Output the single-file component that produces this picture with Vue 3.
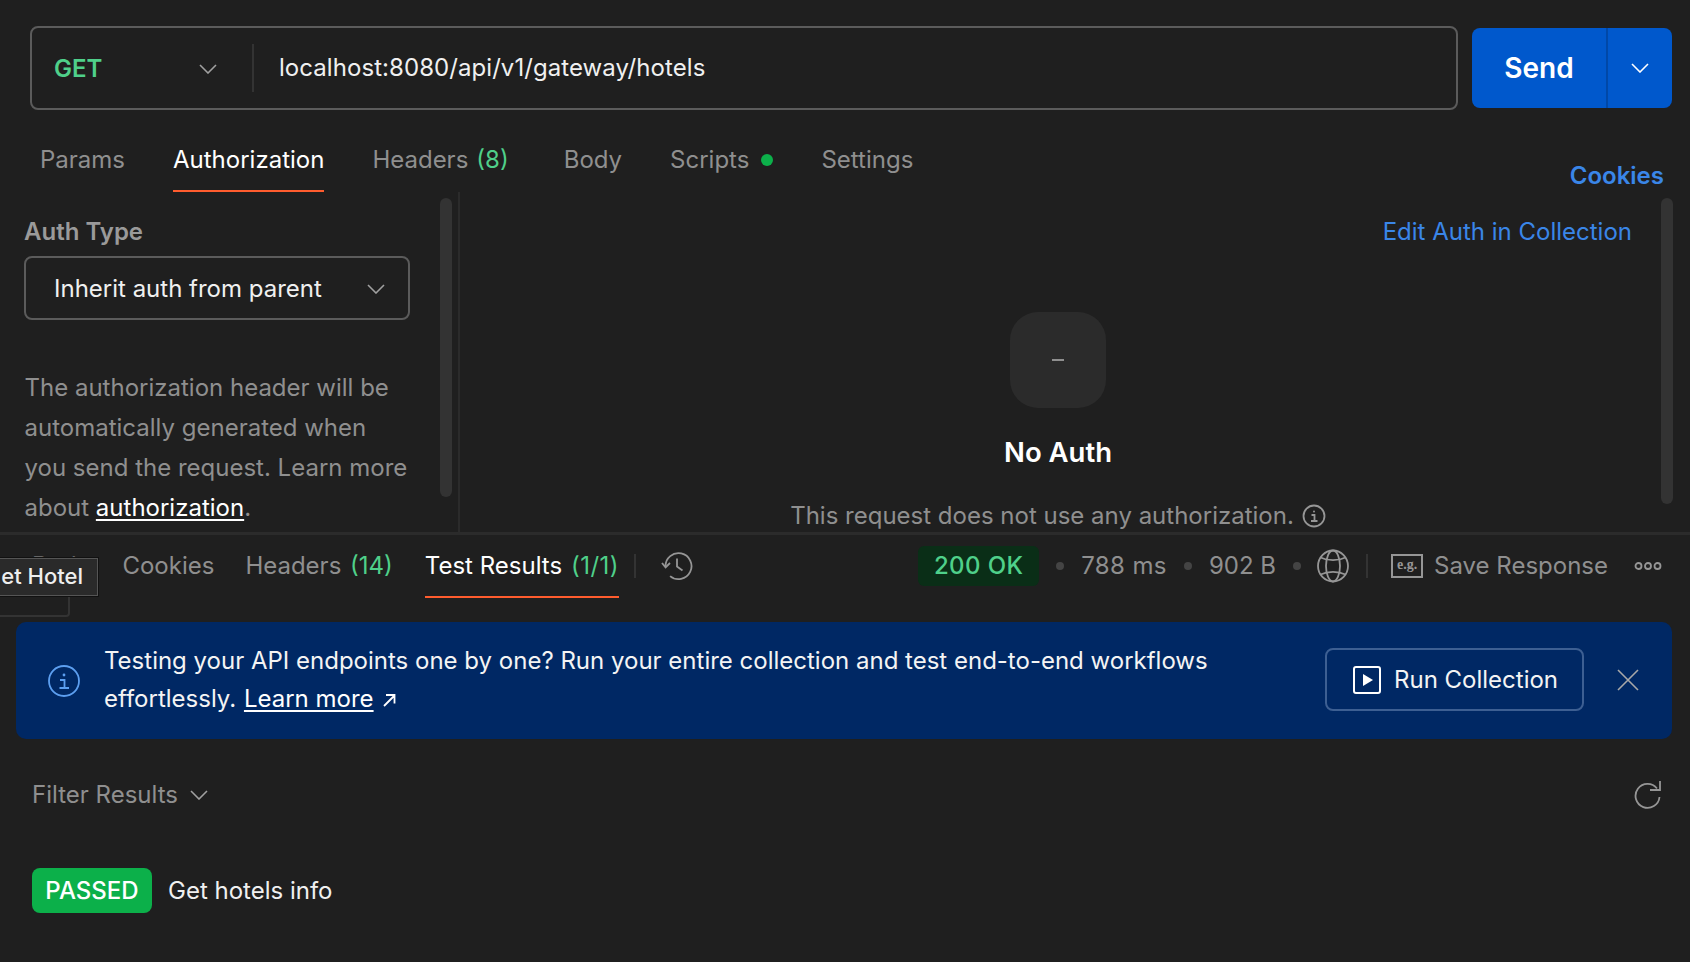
<script setup>
const reqTabs = [
  { label: 'Params' },
  { label: 'Authorization', active: true },
  { label: 'Headers', count: '(8)', wide: true },
  { label: 'Body' },
  { label: 'Scripts', dot: true },
  { label: 'Settings' }
]
</script>

<template>
  <div class="page">
    <div class="request-row">
      <div class="url-bar">
        <div class="method">
          <span class="method-name">GET</span>
          <svg class="chev" width="18" height="10" viewBox="0 0 18 10"><path d="M1 1l8 8 8-8" /></svg>
        </div>
        <div class="url">localhost:8080/api/v1/gateway/hotels</div>
      </div>
      <div class="send">
        <span class="send-label">Send</span>
        <span class="send-more">
          <svg class="chev white" width="18" height="10" viewBox="0 0 18 10"><path d="M1 1l8 8 8-8" /></svg>
        </span>
      </div>
    </div>

    <div class="req-tabs">
      <div
        v-for="t in reqTabs"
        :key="t.label"
        class="tab"
        :class="{ active: t.active, wide: t.wide }"
      >
        {{ t.label }}<span v-if="t.count" class="count">{{ t.count }}</span><span v-if="t.dot" class="dot"></span>
      </div>
      <div class="cookies-link">Cookies</div>
    </div>

    <div class="panes">
      <div class="left-pane">
        <div class="auth-label">Auth Type</div>
        <div class="auth-select">
          <span>Inherit auth from parent</span>
          <svg class="chev" width="18" height="10" viewBox="0 0 18 10"><path d="M1 1l8 8 8-8" /></svg>
        </div>
        <p class="auth-help">
          The authorization header will be automatically generated when you send the request. Learn more about <a class="link">authorization</a>.
        </p>
        <div class="scrollbar left-scroll"></div>
      </div>
      <div class="right-pane">
        <div class="edit-link">Edit Auth in Collection</div>
        <div class="no-auth-icon"><span class="dash"></span></div>
        <div class="no-auth-title">No Auth</div>
        <div class="no-auth-text">
          This request does not use any authorization.
          <svg width="24" height="24" viewBox="0 0 24 24" class="ic-gray">
            <circle cx="12" cy="12" r="10.5" />
            <circle cx="12" cy="7.5" r="1" class="fill" />
            <path d="M9.5 11h3v6M9 17h6.5" />
          </svg>
        </div>
        <div class="scrollbar right-scroll"></div>
      </div>
    </div>

    <div class="res-bar">
      <div class="res-tabs">
        <div class="tab res-body">Body</div>
        <div class="tab">Cookies</div>
        <div class="tab">Headers <span class="count-tight">(14)</span></div>
        <div class="tab active">Test Results <span class="count-tight spaced">(1/1)</span></div>
      </div>
      <span class="vsep first-sep"></span>
      <svg class="ic-gray history" width="32" height="32" viewBox="0 0 32 32">
        <path d="M4.5 16.5a13 13 0 1 1 4.6 9.6" />
        <path d="M1 13l3.6 4.4L9 13" />
        <path d="M16 8.5v8l5.5 4" />
      </svg>
      <div class="res-meta">
        <span class="status">200 OK</span>
        <span class="mdot"></span>
        <span class="time">788 ms</span>
        <span class="mdot tight"></span>
        <span>902 B</span>
        <span class="mdot"></span>
        <svg class="ic-gray globe" width="32" height="34" viewBox="0 0 32 34">
          <ellipse cx="16" cy="17" rx="15" ry="15.5" />
          <ellipse cx="16" cy="17" rx="7" ry="15.5" />
          <path d="M3.5 8.5c7 3.5 18 3.5 25 0M3.5 25.5c7-3.5 18-3.5 25 0" />
        </svg>
        <span class="vsep"></span>
        <span class="eg">e.g.</span>
        <span class="save">Save Response</span>
        <svg class="ic-gray more" width="28" height="10" viewBox="0 0 28 10">
          <circle cx="4.5" cy="5" r="3" />
          <circle cx="14" cy="5" r="3" />
          <circle cx="23.5" cy="5" r="3" />
        </svg>
      </div>
      <div class="under-tip"></div>
      <div class="tooltip">et Hotel</div>
    </div>

    <div class="banner">
      <svg class="ic-blue" width="32" height="32" viewBox="0 0 32 32">
        <circle cx="16" cy="16" r="15" />
        <circle cx="16" cy="10" r="1.4" class="fill" />
        <path d="M12 15h4.5v8M11.5 23h9.5" />
      </svg>
      <div class="banner-text">
        Testing your API endpoints one by one? Run your entire collection and test end-to-end workflows effortlessly. <a class="link">Learn more</a>
        <svg class="arrow" width="14" height="14" viewBox="0 0 14 14"><path d="M2 13L12 3M4 2h8.5v8.5" /></svg>
      </div>
      <div class="run-btn">
        <svg class="play" width="28" height="28" viewBox="0 0 28 28">
          <rect x="1" y="1" width="26" height="26" rx="2" />
          <path d="M10 8l10 6-10 6z" class="solid" />
        </svg>
        Run Collection
      </div>
      <svg class="close" width="22" height="22" viewBox="0 0 22 22"><path d="M1 1l20 20M21 1L1 21" /></svg>
    </div>

    <div class="filter-row">
      <div class="filter">
        Filter Results
        <svg class="chev" width="18" height="10" viewBox="0 0 18 10"><path d="M1 1l8 8 8-8" /></svg>
      </div>
      <svg class="ic-gray" width="28" height="28" viewBox="0 0 28 28">
        <path d="M23 7.5A12 12 0 1 0 25.5 16" />
        <path d="M16 9h10V0" />
      </svg>
    </div>

    <div class="result-row">
      <span class="passed">PASSED</span>
      <span class="result-name">Get hotels info</span>
    </div>
  </div>
</template>

<style>
html, body { margin: 0; background: #1f1f1f; }
</style>

<style scoped>
.page {
  width: 1690px;
  height: 962px;
  overflow: hidden;
  background: #1f1f1f;
  color: #fff;
  font-family: Inter, "Noto Sans", sans-serif;
  font-size: 24px;
  line-height: 32px;
  position: relative;
}
.request-row {
  display: flex;
  align-items: center;
  gap: 14px;
  padding: 26px 18px 0 30px;
}
.url-bar {
  flex: 1;
  height: 84px;
  box-sizing: border-box;
  border: 2px solid #5b5b5b;
  border-radius: 8px;
  display: flex;
  align-items: center;
}
.method {
  width: 222px;
  height: 48px;
  box-sizing: border-box;
  padding: 2px 35px 0 22px;
  display: flex;
  align-items: center;
  justify-content: space-between;
  border-right: 2px solid #333;
}
.method-name { color: #4fd08a; font-weight: 600; }
.url { padding-left: 25px; color: #f0f0f0; letter-spacing: 0.06px; }
.chev { fill: none; stroke: #a0a0a0; stroke-width: 1.6; flex: none; }
.chev.white { stroke: #fff; }
.send {
  width: 200px;
  height: 80px;
  background: #0058cc;
  border-radius: 8px;
  display: flex;
  align-items: center;
}
.send-label {
  width: 136px;
  height: 80px;
  box-sizing: border-box;
  border-right: 2px solid #0048a8;
  display: flex;
  align-items: center;
  justify-content: center;
  font-size: 28px;
  font-weight: 600;
}
.send-more { flex: 1; display: flex; align-items: center; justify-content: center; }
.req-tabs {
  display: flex;
  gap: 48px;
  height: 82px;
  padding-left: 40px;
  padding-right: 26px;
  box-sizing: border-box;
  position: relative;
}
.tab {
  color: #8f8f8f;
  height: 100%;
  box-sizing: border-box;
  padding-top: 34px;
  display: flex;
  align-items: flex-start;
  white-space: pre;
  position: relative;
}
.tab.active { color: #fff; }
.tab.active::after {
  content: "";
  position: absolute;
  left: 0;
  right: 0;
  bottom: 0;
  height: 2px;
  background: #ff5c2e;
}
.tab.wide { margin-right: 7px; }
.count { color: #4fd08a; margin-left: 8px; }
.count-tight { color: #4fd08a; margin-left: 2px; }
.count-tight.spaced { margin-left: 2px; letter-spacing: 0.5px; }
.dot {
  width: 12px;
  height: 12px;
  border-radius: 50%;
  background: #0cb04a;
  margin: 10px 0 0 12px;
}
.cookies-link {
  margin-left: auto;
  padding-top: 50px;
  color: #3a86e8;
  font-weight: 600;
}
.panes {
  display: flex;
  height: 340px;
  overflow: hidden;
}
.left-pane {
  width: 460px;
  box-sizing: border-box;
  flex: none;
  border-right: 2px solid #2b2b2b;
  padding: 24px 0 0 24px;
  position: relative;
}
.auth-label { color: #9a9a9a; font-weight: 600; }
.auth-select {
  width: 386px;
  height: 64px;
  box-sizing: border-box;
  margin-top: 8px;
  border: 2px solid #5b5b5b;
  border-radius: 8px;
  display: flex;
  align-items: center;
  justify-content: space-between;
  padding: 2px 23px 0 28px;
  color: #f0f0f0;
}
.auth-help {
  margin: 48px 0 0 0.5px;
  width: 385px;
  line-height: 40px;
  color: #8f8f8f;
}
.link { color: #fff; text-decoration: underline; text-underline-offset: 3px; }
.scrollbar {
  position: absolute;
  width: 12px;
  border-radius: 6px;
  background: #333;
}
.left-scroll { left: 440px; top: 6px; height: 299px; }
.right-scroll { right: 17px; top: 6px; height: 306px; }
.right-pane {
  flex: 1;
  display: flex;
  flex-direction: column;
  align-items: center;
  padding-right: 34px;
  position: relative;
}
.edit-link {
  align-self: flex-end;
  margin: 24px 24px 0 0;
  color: #3a86e8;
}
.no-auth-icon {
  width: 96px;
  height: 96px;
  margin-top: 64px;
  border-radius: 28px;
  background: #2b2b2b;
  display: flex;
  align-items: center;
  justify-content: center;
}
.dash { width: 12px; height: 2px; background: #8f8f8f; }
.no-auth-title { margin-top: 28px; font-size: 27.5px; line-height: 32px; font-weight: 600; }
.no-auth-text {
  margin-top: 32px;
  color: #8f8f8f;
  display: flex;
  align-items: center;
  gap: 8px;
  white-space: nowrap;
}
.ic-gray { fill: none; stroke: #969696; stroke-width: 1.8; flex: none; }
.ic-gray .fill { fill: #969696; stroke: none; }
.res-bar {
  border-top: 3px solid #2b2b2b;
  height: 90px;
  box-sizing: border-box;
  display: flex;
  align-items: flex-start;
  position: relative;
  padding-right: 28px;
}
.res-tabs {
  display: flex;
  gap: 32px;
  height: 63px;
  padding-left: 32px;
}
.res-tabs .tab { padding-top: 15px; }
.res-tabs .tab:nth-child(2) { margin-right: -1px; }
.res-body { color: #666; }
.vsep { width: 2px; height: 24px; background: #333; flex: none; }
.first-sep { margin: 19px 0 0 15px; }
.history { margin: 15px 0 0 25px; }
.res-meta {
  margin-left: auto;
  height: 62px;
  display: flex;
  align-items: center;
  color: #8f8f8f;
}
.status {
  width: 121px;
  height: 40px;
  border-radius: 6px;
  background: #0a2e17;
  color: #4fd08a;
  display: flex;
  align-items: center;
  justify-content: center;
  font-weight: 500;
  letter-spacing: 0.4px;
}
.time { letter-spacing: 0.4px; }
.mdot {
  width: 8px;
  height: 8px;
  border-radius: 50%;
  background: #444;
  margin: 0 17px;
}
.mdot.tight { margin-right: 17px; }
.globe { margin-left: -1px; }
.res-meta .vsep { margin: 0 23px 0 17px; }
.eg {
  width: 32px;
  height: 24px;
  box-sizing: border-box;
  border: 2px solid #969696;
  font: 700 14px/18px "Liberation Serif", serif;
  text-align: center;
  color: #969696;
  margin-right: 11px;
}
.save { margin-right: 26px; }
.under-tip {
  position: absolute;
  left: -10px;
  top: 30px;
  width: 80px;
  height: 52px;
  box-sizing: border-box;
  border: 2px solid #333;
  border-radius: 4px;
  background: #1f1f1f;
}
.tooltip {
  position: absolute;
  left: -20px;
  top: 23px;
  width: 118px;
  height: 38px;
  box-sizing: border-box;
  padding-right: 14px;
  text-align: right;
  font-size: 22px;
  line-height: 35px;
  font-weight: 500;
  color: #eee;
  background: #2a2a2a;
  border: 1px solid #555;
  outline: 1px solid #111;
  white-space: nowrap;
}
.banner {
  margin: 0 18px 0 16px;
  height: 117px;
  box-sizing: border-box;
  border-radius: 10px;
  background: #002864;
  display: flex;
  align-items: center;
  padding-left: 32px;
  position: relative;
}
.ic-blue { fill: none; stroke: #5c9ff0; stroke-width: 1.8; flex: none; }
.ic-blue .fill { fill: #5c9ff0; stroke: none; }
.banner-text {
  width: 1130px;
  margin-left: 24px;
  line-height: 38.5px;
  color: #f4f4f4;
  position: relative;
  top: -0.5px;
}
.banner-text .link { margin-left: 1px; }
.arrow { fill: none; stroke: #fff; stroke-width: 1.8; margin-left: 8px; }
.run-btn {
  width: 259px;
  height: 63px;
  box-sizing: border-box;
  margin-left: 91px;
  border: 2px solid #3d5f92;
  border-radius: 8px;
  display: flex;
  align-items: center;
  gap: 13px;
  padding-left: 26px;
  margin-top: -2px;
  color: #f4f4f4;
  white-space: nowrap;
}
.play { fill: none; stroke: #fff; stroke-width: 2; flex: none; }
.play .solid { fill: #fff; stroke: none; }
.close { fill: none; stroke: #a8a8a8; stroke-width: 1.6; margin-left: 33px; flex: none; margin-top: -2px; }
.filter-row {
  display: flex;
  align-items: center;
  justify-content: space-between;
  padding: 40px 28px 0 32px;
  height: 32px;
}
.filter { display: flex; align-items: center; gap: 12px; color: #8f8f8f; white-space: nowrap; }
.result-row {
  display: flex;
  align-items: center;
  gap: 16px;
  margin: 57px 0 0 32px;
}
.passed {
  width: 120px;
  height: 45px;
  border-radius: 8px;
  background: #0cb04a;
  display: flex;
  align-items: center;
  justify-content: center;
  font-weight: 500;
}
.result-name { color: #f0f0f0; }
</style>
